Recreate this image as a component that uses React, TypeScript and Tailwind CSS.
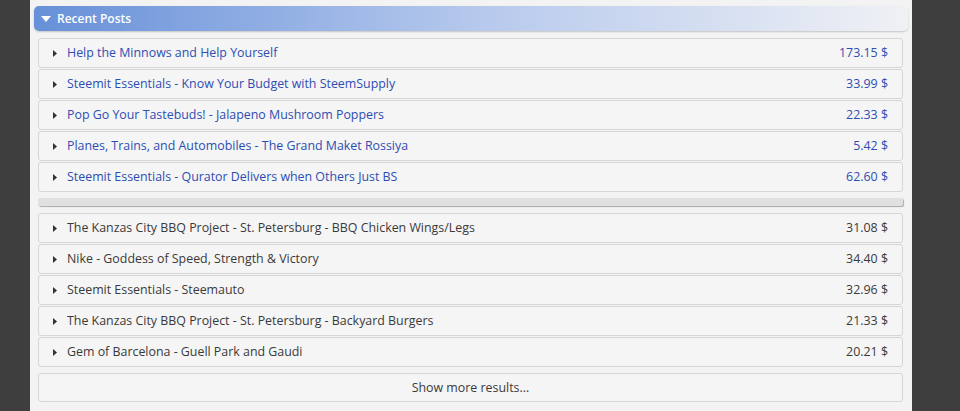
import React from "react";

const blue = [
  ["Help the Minnows and Help Yourself", "173.15 $"],
  ["Steemit Essentials - Know Your Budget with SteemSupply", "33.99 $"],
  ["Pop Go Your Tastebuds! - Jalapeno Mushroom Poppers", "22.33 $"],
  ["Planes, Trains, and Automobiles - The Grand Maket Rossiya", "5.42 $"],
  ["Steemit Essentials - Qurator Delivers when Others Just BS", "62.60 $"],
];
const dark = [
  ["The Kanzas City BBQ Project - St. Petersburg - BBQ Chicken Wings/Legs", "31.08 $"],
  ["Nike - Goddess of Speed, Strength & Victory", "34.40 $"],
  ["Steemit Essentials - Steemauto", "32.96 $"],
  ["The Kanzas City BBQ Project - St. Petersburg - Backyard Burgers", "21.33 $"],
  ["Gem of Barcelona - Guell Park and Gaudi", "20.21 $"],
];

function Row({ title, price, isBlue }: { title: string; price: string; isBlue: boolean }) {
  return (
    <div
      className={`h-[30px] flex items-center rounded-[3px] border border-[#d6d6d6] bg-[#f5f5f5] pl-[14px] pr-[14px] ${
        isBlue ? "text-[#2d4db3]" : "text-[#3a3a3a]"
      }`}
    >
      <svg width="4" height="7" viewBox="0 0 4 7" className="shrink-0">
        <path d="M0 0 L4 3.5 L0 7 Z" fill="#333" />
      </svg>
      <span className="ml-[10px] flex-1 truncate pt-[1px]">{title}</span>
      <span className="pt-[1px]">{price}</span>
    </div>
  );
}

export default function App() {
  return (
    <div
      className="w-[960px] h-[411px] bg-[#3e3e3e] overflow-hidden pl-[30px] text-[12.4px]"
      style={{ fontFamily: '"Open Sans", "Noto Sans", sans-serif' }}
    >
      <div className="w-[882px] h-full bg-[#f3f3f3] pt-[6px]">
        <div className="mx-[4px] h-[25px] rounded-[5px] bg-gradient-to-r from-[#6790d8] via-[#b5c8ec] to-[#f0f1f5] shadow-[0_1px_2px_rgba(0,0,0,0.2)] flex items-center pl-[7px]">
          <svg width="10" height="6" viewBox="0 0 10 6">
            <path d="M0 0 L10 0 L5 6 Z" fill="#fff" />
          </svg>
          <span className="ml-[6px] text-white font-semibold text-[12px]">Recent Posts</span>
        </div>
        <div className="ml-[8px] mr-[9px] mt-[7px] flex flex-col">
          <div className="flex flex-col gap-[1px]">
            {blue.map(([t, p]) => (
              <Row key={t} title={t} price={p} isBlue />
            ))}
          </div>
          <div className="mt-[6px] h-[8px] rounded-[2px] bg-[#e0e0e0] shadow-[1px_1px_1px_rgba(0,0,0,0.3)]" />
          <div className="mt-[7px] flex flex-col gap-[1px]">
            {dark.map(([t, p]) => (
              <Row key={t} title={t} price={p} isBlue={false} />
            ))}
          </div>
          <div className="mt-[6px] h-[29px] rounded-[3px] border border-[#d6d6d6] bg-[#f5f5f5] flex items-center justify-center text-[#3a3a3a] pt-[1px]">
            Show more results...
          </div>
        </div>
      </div>
    </div>
  );
}
